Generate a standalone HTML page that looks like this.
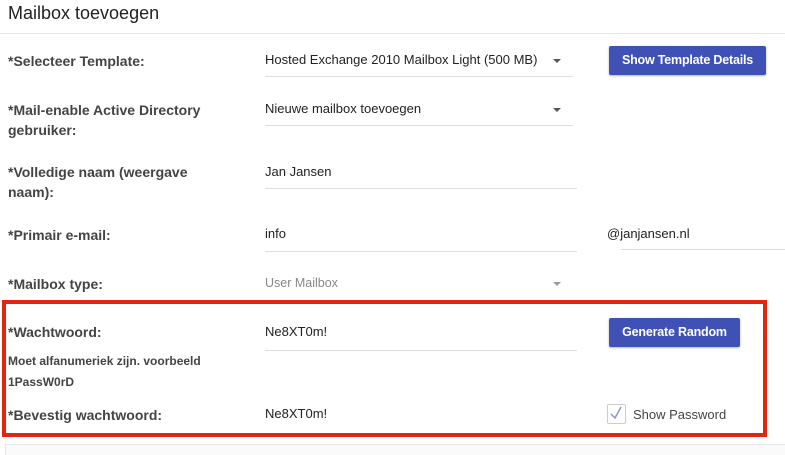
<!DOCTYPE html>
<html><head><style>
body{margin:0;width:785px;height:450px;background:#fff;font-family:"Liberation Sans",sans-serif;position:relative;overflow:hidden;color:#222}
.a{position:absolute;white-space:nowrap}
.lbl{font-weight:bold;font-size:14px;color:#444;line-height:20px}
.val{font-size:13px;color:#222}
.ul{position:absolute;height:1px;background:#ddd}
.btn{position:absolute;background:#3f51b5;color:#fff;font-weight:bold;font-size:12.5px;letter-spacing:-0.2px;text-align:center;border-radius:2px;box-shadow:0 1px 2px rgba(0,0,0,.3)}
.arr{position:absolute;width:0;height:0;border-left:4px solid transparent;border-right:4px solid transparent;border-top:4px solid #555}
</style></head><body>
<div class="a" style="left:8px;top:3px;font-size:18px;color:#222">Mailbox toevoegen</div>
<div class="ul" style="left:0;top:33px;width:785px;background:#e6e6e6"></div>

<div class="a lbl" style="left:8px;top:51px">*Selecteer Template:</div>
<div class="a val" style="left:265px;top:52px">Hosted Exchange 2010 Mailbox Light (500 MB)</div>
<div class="arr" style="left:553px;top:59px"></div>
<div class="ul" style="left:265px;top:76px;width:308px"></div>
<div class="btn" style="left:609px;top:46px;width:157px;height:29px;line-height:29px">Show Template Details</div>

<div class="a lbl" style="left:8px;top:100px">*Mail-enable Active Directory<br>gebruiker:</div>
<div class="a val" style="left:265px;top:101px">Nieuwe mailbox toevoegen</div>
<div class="arr" style="left:553px;top:108px"></div>
<div class="ul" style="left:265px;top:125px;width:308px"></div>

<div class="a lbl" style="left:8px;top:162px">*Volledige naam (weergave<br>naam):</div>
<div class="a val" style="left:265px;top:164px">Jan Jansen</div>
<div class="ul" style="left:265px;top:188px;width:312px"></div>

<div class="a lbl" style="left:8px;top:225px">*Primair e-mail:</div>
<div class="a val" style="left:265px;top:226px">info</div>
<div class="ul" style="left:265px;top:251px;width:312px"></div>
<div class="a val" style="left:607px;top:226px">@janjansen.nl</div>
<div class="ul" style="left:621px;top:249px;width:164px"></div>

<div class="a lbl" style="left:8px;top:274px">*Mailbox type:</div>
<div class="a val" style="left:265px;top:276px;color:#888;font-size:12.5px">User Mailbox</div>
<div class="arr" style="left:553px;top:282px;border-top-color:#999"></div>

<div class="a" style="left:2px;top:300px;width:757px;height:129px;border:4px solid #e0260f"></div>
<div class="a lbl" style="left:8px;top:322px">*Wachtwoord:</div>
<div class="a val" style="left:265px;top:324px">Ne8XT0m!</div>
<div class="ul" style="left:265px;top:350px;width:312px"></div>
<div class="btn" style="left:609px;top:318px;width:131px;height:29px;line-height:29px">Generate Random</div>
<div class="a" style="left:8px;top:351px;font-size:12px;font-weight:bold;color:#444;line-height:21px">Moet alfanumeriek zijn. voorbeeld<br>1PassW0rD</div>
<div class="a lbl" style="left:8px;top:405px">*Bevestig wachtwoord:</div>
<div class="a val" style="left:265px;top:406px">Ne8XT0m!</div>
<div class="a" style="left:607px;top:404px;width:17px;height:18px;border:1px solid #ccc;border-radius:2px"></div>
<svg class="a" style="left:609px;top:405px" width="14" height="16"><path d="M2 9 L6 13 L12 2" stroke="#8a95d8" stroke-width="1.5" fill="none"/></svg>
<div class="a val" style="left:633px;top:407px;color:#444;font-size:13px">Show Password</div>

<div class="a" style="left:5px;top:444px;width:780px;height:10px;border-top:1px solid #e5e5e5;border-left:1px solid #e5e5e5;background:#fafafa"></div>
</body></html>
